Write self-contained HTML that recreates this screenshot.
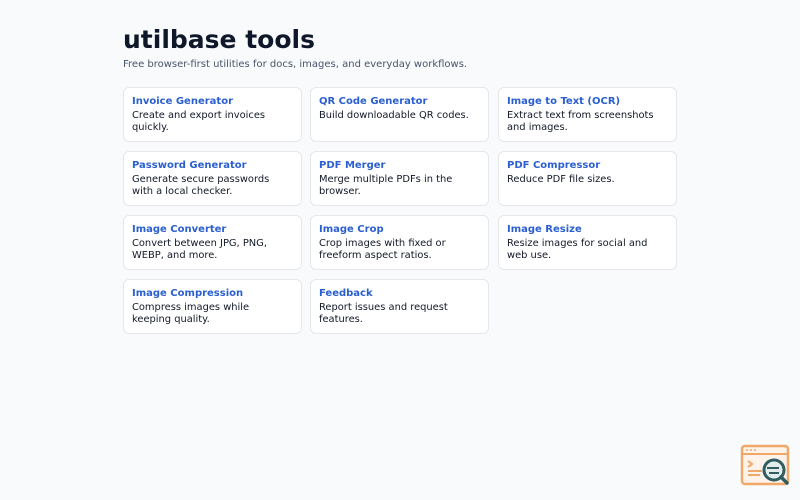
<!DOCTYPE html>
<html><head><style>
body{margin:0;background:#f8fafc;font-family:"DejaVu Sans",sans-serif;width:800px;height:500px;overflow:hidden;position:relative}
h1{position:absolute;left:123px;top:25px;margin:0;font-size:25px;font-weight:bold;color:#0f172a;letter-spacing:0}
.sub{position:absolute;left:123px;top:59px;font-size:10px;color:#475569}
.card{position:absolute;width:179px;height:55px;background:#fff;border:1px solid #e5e7eb;border-radius:6px;box-sizing:border-box;padding:7px 12px 7px 8px}
.card b{display:block;color:#2b5fd0;font-size:10px;line-height:13px;margin-bottom:2px}
.card span{display:block;color:#111827;font-size:9.9px;line-height:12px}
</style></head><body>
<h1>utilbase tools</h1>
<div class="sub">Free browser-first utilities for docs, images, and everyday workflows.</div>
<div class="card" style="left:123px;top:87px"><b>Invoice Generator</b><span>Create and export invoices quickly.</span></div>
<div class="card" style="left:310px;top:87px"><b>QR Code Generator</b><span>Build downloadable QR codes.</span></div>
<div class="card" style="left:498px;top:87px"><b>Image to Text (OCR)</b><span>Extract text from screenshots and images.</span></div>
<div class="card" style="left:123px;top:151px"><b>Password Generator</b><span>Generate secure passwords with a local checker.</span></div>
<div class="card" style="left:310px;top:151px"><b>PDF Merger</b><span>Merge multiple PDFs in the browser.</span></div>
<div class="card" style="left:498px;top:151px"><b>PDF Compressor</b><span>Reduce PDF file sizes.</span></div>
<div class="card" style="left:123px;top:215px"><b>Image Converter</b><span>Convert between JPG, PNG, WEBP, and more.</span></div>
<div class="card" style="left:310px;top:215px"><b>Image Crop</b><span>Crop images with fixed or freeform aspect ratios.</span></div>
<div class="card" style="left:498px;top:215px"><b>Image Resize</b><span>Resize images for social and web use.</span></div>
<div class="card" style="left:123px;top:279px"><b>Image Compression</b><span>Compress images while<br>keeping quality.</span></div>
<div class="card" style="left:310px;top:279px"><b>Feedback</b><span>Report issues and request features.</span></div>
<svg style="position:absolute;left:738px;top:442px" width="56" height="50" viewBox="0 0 56 50">
<rect x="4" y="4" width="46" height="38" rx="3" fill="#fdf3ea" stroke="#f0a868" stroke-width="2.5"/>
<line x1="4" y1="12" x2="50" y2="12" stroke="#f0a868" stroke-width="2"/>
<g fill="#f0a868"><circle cx="9" cy="8" r="1"/><circle cx="13" cy="8" r="1"/><circle cx="17" cy="8" r="1"/></g>
<path d="M10 19l4 3-4 3M10 29h14M10 33h12" stroke="#f0a868" stroke-width="2" fill="none"/>
<circle cx="36" cy="28" r="10" fill="#e3ecec" stroke="#2f5d62" stroke-width="3"/>
<path d="M29 26h12M31 31h10" stroke="#2f5d62" stroke-width="2"/>
<path d="M43 35l6 6" stroke="#2f5d62" stroke-width="3.5" stroke-linecap="round"/>
</svg>
</body></html>
